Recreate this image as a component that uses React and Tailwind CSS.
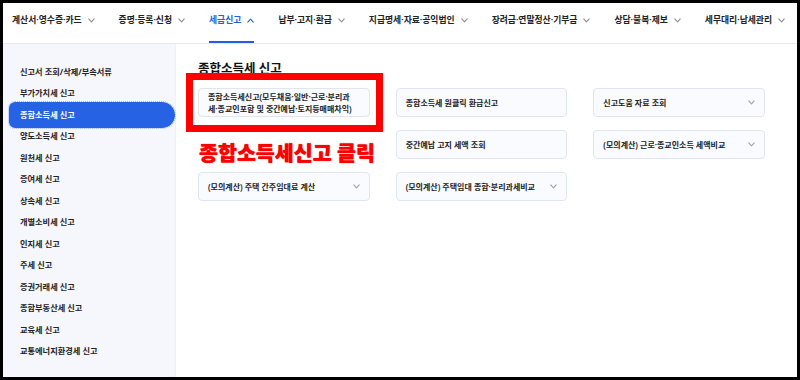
import React from "react";

const navItems = [
  { label: "계산서·영수증·카드" },
  { label: "증명·등록·신청" },
  { label: "세금신고", active: true },
  { label: "납부·고지·환급" },
  { label: "지급명세·자료·공익법인" },
  { label: "장려금·연말정산·기부금" },
  { label: "상담·불복·제보" },
  { label: "세무대리·납세관리" },
];

const sideItems = [
  "신고서 조회/삭제/부속서류",
  "부가가치세 신고",
  "종합소득세 신고",
  "양도소득세 신고",
  "원천세 신고",
  "증여세 신고",
  "상속세 신고",
  "개별소비세 신고",
  "인지세 신고",
  "주세 신고",
  "증권거래세 신고",
  "종합부동산세 신고",
  "교육세 신고",
  "교통에너지환경세 신고",
];

function Chevron({ up, className }) {
  return (
    <svg width="7" height="5" viewBox="0 0 7 5" className={className} fill="none">
      <polyline
        points={up ? "0.8,4.2 3.5,1.2 6.2,4.2" : "0.8,0.8 3.5,3.8 6.2,0.8"}
        stroke="currentColor"
        strokeWidth="1.1"
        strokeLinecap="round"
        strokeLinejoin="round"
      />
    </svg>
  );
}

function Card({ children, arrow }) {
  return (
    <div className="flex h-[29px] items-center justify-between rounded-[4px] border border-[#dfe6f2] bg-[#f9fbff] px-[9px]">
      <span className="text-[8px] font-semibold leading-[12px] text-[#222]">{children}</span>
      {arrow && <Chevron className="shrink-0 text-[#9aa3b0]" />}
    </div>
  );
}

export default function App() {
  return (
    <div className="h-[380px] w-[800px] overflow-hidden border-[3px] border-black bg-white font-['Noto_Sans','Noto_Sans_CJK_KR',sans-serif]">
      <div className="flex h-full flex-col">
        {/* Top navigation */}
        <nav className="flex h-[41px] shrink-0 items-stretch gap-[24px] border-b border-[#e6e8ec] pl-[9px]">
          {navItems.map((item) => (
            <div
              key={item.label}
              className={`flex items-start gap-[6px] border-b-2 pt-[11px] ${
                item.active ? "border-[#1f5fe0] text-[#1f5fe0]" : "border-transparent text-[#222]"
              }`}
            >
              <span className="text-[8.8px] font-semibold leading-[12px] whitespace-nowrap">{item.label}</span>
              <Chevron up={item.active} className={`mt-[4px] ${item.active ? "text-[#1f5fe0]" : "text-[#8a8f98]"}`} />
            </div>
          ))}
        </nav>

        <div className="flex min-h-0 flex-1">
          {/* Sidebar */}
          <aside className="w-[173px] shrink-0 border-r border-[#eef1f6] bg-[#f5f7fc] pt-[17px]">
            <ul className="flex flex-col">
              {sideItems.map((label) =>
                label === "종합소득세 신고" ? (
                  <li
                    key={label}
                    className="-my-[2.25px] ml-[6px] flex h-[26px] items-center rounded-l-[6px] rounded-r-[13px] bg-[#2563e4] pl-[11px] text-[8.2px] font-bold text-white outline-1 outline-dotted outline-[#9bb8f0]"
                  >
                    {label}
                  </li>
                ) : (
                  <li
                    key={label}
                    className="flex h-[21.5px] items-center pl-[17px] text-[8.2px] font-bold text-[#222]"
                  >
                    {label}
                  </li>
                )
              )}
            </ul>
          </aside>

          {/* Main content */}
          <main className="relative flex-1 pl-[22px] pr-[32px] pt-[16px]">
            <h2 className="text-[12.5px] font-semibold leading-[18px] text-[#111]">종합소득세 신고</h2>
            <div className="mt-[10px] grid grid-cols-3 gap-x-[26px] gap-y-[13px]">
              <Card>
                종합소득세신고(모두채움·일반·근로·분리과
                <br />
                세·종교인포함 및 중간예납·토지등매매차익)
              </Card>
              <Card>종합소득세 원클릭 환급신고</Card>
              <Card arrow>신고도움 자료 조회</Card>

              <div className="h-[29px]" />
              <Card>중간예납 고지 세액 조회</Card>
              <Card arrow>(모의계산) 근로·종교인소득 세액비교</Card>

              <Card arrow>(모의계산) 주택 간주임대료 계산</Card>
              <Card arrow>(모의계산) 주택임대 종합·분리과세비교</Card>
            </div>

            {/* annotation overlay */}
            <div className="absolute left-[10px] top-[29px] h-[59px] w-[197px] border-[7px] border-[#ff0000]" />
            <div className="absolute left-[23px] top-[97px] text-[20.6px] font-black leading-[24px] text-[#ff0000] [text-shadow:0_0_1px_#c00]">
              종합소득세신고 클릭
            </div>
          </main>
        </div>
      </div>
    </div>
  );
}
